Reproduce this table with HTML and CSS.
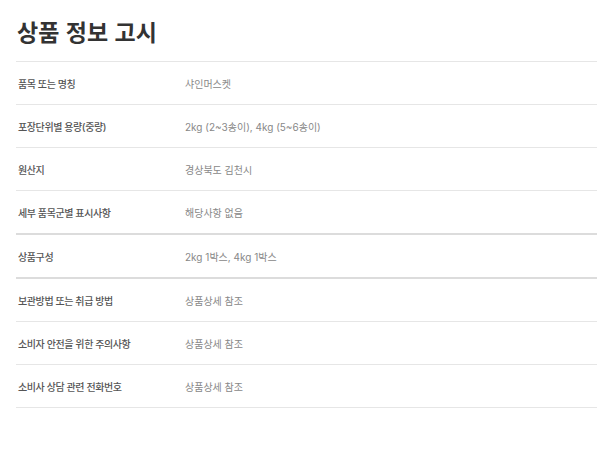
FILE: index.html
```html
<!DOCTYPE html>
<html lang="ko">
<head>
<meta charset="utf-8">
<link rel="stylesheet" href="styles.css">
</head>
<body>
<section class="notice">
  <h1 class="title">상품 정보 고시</h1>
  <div class="table">
    <div class="row"><div class="label">품목 또는 명칭</div><div class="value">샤인머스켓</div></div>
    <div class="row"><div class="label">포장단위별 용량(중량)</div><div class="value">2kg (2~3송이), 4kg (5~6송이)</div></div>
    <div class="row"><div class="label">원산지</div><div class="value">경상북도 김천시</div></div>
    <div class="row strong"><div class="label">세부 품목군별 표시사항</div><div class="value">해당사항 없음</div></div>
    <div class="row strong"><div class="label">상품구성</div><div class="value">2kg 1박스, 4kg 1박스</div></div>
    <div class="row"><div class="label">보관방법 또는 취급 방법</div><div class="value">상품상세 참조</div></div>
    <div class="row"><div class="label">소비자 안전을 위한 주의사항</div><div class="value">상품상세 참조</div></div>
    <div class="row"><div class="label">소비사 상담 관련 전화번호</div><div class="value">상품상세 참조</div></div>
  </div>
</section>
</body>
</html>
```
FILE: styles.css
```css
html, body {
  margin: 0;
  padding: 0;
  background: #fff;
}
body {
  font-family: Inter, "Noto Sans CJK KR", sans-serif;
}
.notice {
  padding: 14px 13px 0 16px;
}
.title {
  margin: 0;
  font-family: "Noto Sans CJK KR", sans-serif;
  font-size: 23px;
  font-weight: 700;
  color: #333;
  line-height: 34px;
  padding-bottom: 13px;
  border-bottom: 1px solid #e6e6e6;
  padding-left: 1px;
}
.table {
  display: flex;
  flex-direction: column;
}
.row {
  box-sizing: border-box;
  display: grid;
  grid-template-columns: 167px 1fr;
  align-items: center;
  height: 43px;
  border-bottom: 1px solid #e6e6e6;
  font-size: 10px;
  padding-left: 2px;
}
.row.strong {
  border-bottom: 2px solid #dcdcdc;
  height: 44px;
}
.label {
  color: #555;
  font-weight: 500;
  letter-spacing: -0.4px;
}
.value {
  color: #888;
}
```
